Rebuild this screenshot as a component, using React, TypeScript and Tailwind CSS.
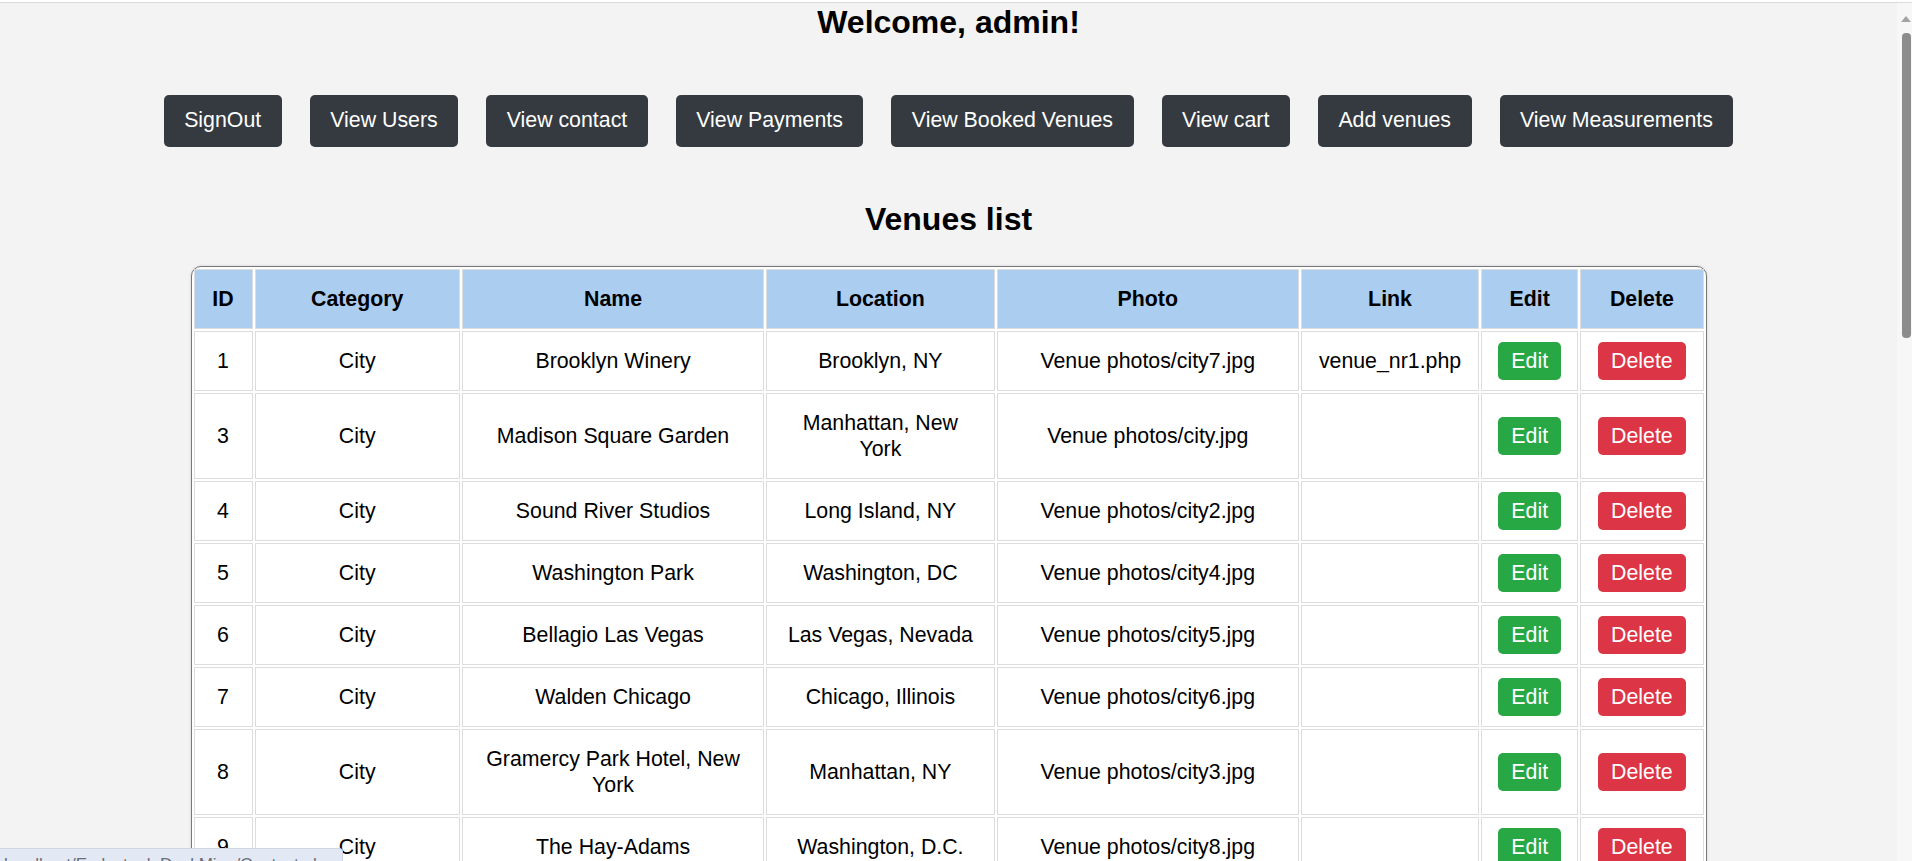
const navLinks = [
  'SignOut',
  'View Users',
  'View contact',
  'View Payments',
  'View Booked Venues',
  'View cart',
  'Add venues',
  'View Measurements',
]

const venues = [
  { id: 1, category: 'City', name: 'Brooklyn Winery', location: 'Brooklyn, NY', photo: 'Venue photos/city7.jpg', link: 'venue_nr1.php' },
  { id: 3, category: 'City', name: 'Madison Square Garden', location: 'Manhattan, New York', photo: 'Venue photos/city.jpg', link: '' },
  { id: 4, category: 'City', name: 'Sound River Studios', location: 'Long Island, NY', photo: 'Venue photos/city2.jpg', link: '' },
  { id: 5, category: 'City', name: 'Washington Park', location: 'Washington, DC', photo: 'Venue photos/city4.jpg', link: '' },
  { id: 6, category: 'City', name: 'Bellagio Las Vegas', location: 'Las Vegas, Nevada', photo: 'Venue photos/city5.jpg', link: '' },
  { id: 7, category: 'City', name: 'Walden Chicago', location: 'Chicago, Illinois', photo: 'Venue photos/city6.jpg', link: '' },
  { id: 8, category: 'City', name: 'Gramercy Park Hotel, New York', location: 'Manhattan, NY', photo: 'Venue photos/city3.jpg', link: '' },
  { id: 9, category: 'City', name: 'The Hay-Adams', location: 'Washington, D.C.', photo: 'Venue photos/city8.jpg', link: '' },
]

const th = 'bg-[#abcdef] border border-[#dddddd] px-[15px] py-[16px] font-bold'
const td = 'border border-[#dddddd] px-[15px] py-[16px]'

export default function App() {
  return (
    <div className="relative h-[861px] overflow-hidden flex flex-col bg-[#f3f3f3] text-black font-['Liberation_Sans',Arial,sans-serif]">
      <div className="h-[3px] shrink-0 bg-white border-b border-[#dadada]" />
      <div className="flex flex-1 min-h-0">
        <main className="flex-1 min-w-0">
          <h1 className="mt-[1px] text-center text-[32px] leading-[37px] font-bold">Welcome, admin!</h1>

          <nav className="mt-[54px] flex justify-center gap-[28px]">
            {navLinks.map((label) => (
              <a
                key={label}
                href="#"
                className="h-[52px] px-[20.5px] flex items-center rounded-[5px] bg-[#343a40] text-white text-[21.33px]"
              >
                {label}
              </a>
            ))}
          </nav>

          <h2 className="mt-[54px] text-center text-[32px] leading-[37px] font-bold">Venues list</h2>

          <table className="mt-[28px] mx-auto w-[1516px] table-fixed border-separate border-spacing-[2px] border border-[#777777] rounded-[10px] bg-white shadow-[0_0_3px_rgba(0,0,0,0.15)] text-center text-[21.33px] leading-[26px]">
            <thead>
              <tr>
                <th className={`${th} w-[59px]`}>ID</th>
                <th className={`${th} w-[205px]`}>Category</th>
                <th className={`${th} w-[302px]`}>Name</th>
                <th className={`${th} w-[228px]`}>Location</th>
                <th className={`${th} w-[302px]`}>Photo</th>
                <th className={`${th} w-[178px]`}>Link</th>
                <th className={`${th} w-[97px]`}>Edit</th>
                <th className={`${th} w-[123px]`}>Delete</th>
              </tr>
            </thead>
            <tbody>
              {venues.map((v) => (
                <tr key={v.id}>
                  <td className={td}>{v.id}</td>
                  <td className={td}>{v.category}</td>
                  <td className={td}>{v.name}</td>
                  <td className={td}>{v.location}</td>
                  <td className={td}>{v.photo}</td>
                  <td className={td}>{v.link}</td>
                  <td className={td}>
                    <a href="#" className="rounded-[5px] bg-[#28a745] px-[13.33px] py-[6.67px] text-white">Edit</a>
                  </td>
                  <td className={td}>
                    <a href="#" className="rounded-[5px] bg-[#dc3545] px-[13.33px] py-[6.67px] text-white">Delete</a>
                  </td>
                </tr>
              ))}
            </tbody>
          </table>
        </main>

        {/* scrollbar */}
        <div className="w-[15px] shrink-0 bg-[#f7f7f7] flex flex-col items-end pr-[1px]">
          <svg width="10" height="8" viewBox="0 0 10 8" className="mt-[12px]">
            <polygon points="0,7 5,1 10,7" fill="#a3a3a3" />
          </svg>
          <div className="mt-[10px] w-[9px] h-[305px] rounded-[4px] bg-[#8c8c8c]" />
        </div>
      </div>

      {/* browser link-preview bubble */}
      <div className="absolute left-0 bottom-[-14px] h-[27px] w-[343px] overflow-hidden whitespace-nowrap rounded-tr-[4px] border-t border-r border-[#cfd6e2] bg-[#e2e9f5] pl-[4px] pt-[7px] text-[17px] leading-none text-[#6b6f75]">
        localhost/Evdesteel_DeskMing/Contact.php
      </div>
    </div>
  )
}
